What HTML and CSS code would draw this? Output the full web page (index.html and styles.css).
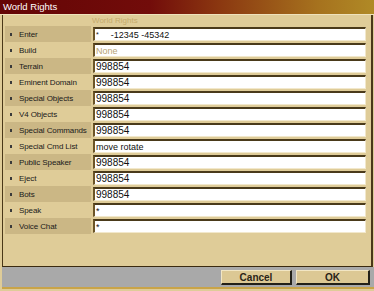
FILE: index.html
```html
<!DOCTYPE html>
<html lang="en">
<head>
  <meta charset="UTF-8" />
  <title>World Rights</title>
  <link rel="stylesheet" href="styles.css">
</head>
<body>
  <div class="window">
    <div class="titlebar">World Rights</div>

    <div class="panel">
      <div class="panel-head">World Rights</div>

      <div class="row dark">
        <div class="label"><span class="dot"></span>Enter</div>
        <div class="value small"><span class="star">*</span>-12345 -45342</div>
      </div>
      <div class="row">
        <div class="label"><span class="dot"></span>Build</div>
        <div class="value none">None</div>
      </div>
      <div class="row dark">
        <div class="label"><span class="dot"></span>Terrain</div>
        <div class="value">998854</div>
      </div>
      <div class="row">
        <div class="label"><span class="dot"></span>Eminent Domain</div>
        <div class="value">998854</div>
      </div>
      <div class="row dark">
        <div class="label"><span class="dot"></span>Special Objects</div>
        <div class="value">998854</div>
      </div>
      <div class="row">
        <div class="label"><span class="dot"></span>V4 Objects</div>
        <div class="value">998854</div>
      </div>
      <div class="row dark">
        <div class="label"><span class="dot"></span>Special Commands</div>
        <div class="value">998854</div>
      </div>
      <div class="row">
        <div class="label"><span class="dot"></span>Special Cmd List</div>
        <div class="value small">move rotate</div>
      </div>
      <div class="row dark">
        <div class="label"><span class="dot"></span>Public Speaker</div>
        <div class="value">998854</div>
      </div>
      <div class="row">
        <div class="label"><span class="dot"></span>Eject</div>
        <div class="value">998854</div>
      </div>
      <div class="row dark">
        <div class="label"><span class="dot"></span>Bots</div>
        <div class="value">998854</div>
      </div>
      <div class="row">
        <div class="label"><span class="dot"></span>Speak</div>
        <div class="value small">*</div>
      </div>
      <div class="row dark">
        <div class="label"><span class="dot"></span>Voice Chat</div>
        <div class="value small">*</div>
      </div>
    </div>

    <div class="footer">
      <button class="btn btn-cancel">Cancel</button>
      <button class="btn btn-ok">OK</button>
    </div>
  </div>
</body>
</html>
```

FILE: styles.css
```css
body {
  margin: 0;
  padding: 0;
  font-family: "Liberation Sans", Arial, sans-serif;
}

.window {
  width: 374px;
  height: 291px;
  background-color: #dfcc98;
  display: flex;
  flex-direction: column;
  overflow: hidden;
}

.titlebar {
  height: 14px;
  line-height: 14px;
  padding-left: 3px;
  font-size: 9.5px;
  color: #ffffff;
  background: linear-gradient(to right, #640505 0%, #720c0a 40%, #8a3610 58%, #a6721e 85%, #b08a26 100%);
  border-bottom: 1px solid #efe2bc;
}

.panel {
  height: 251px;
  margin: 0 1px 0 2px;
  padding: 0 2px 0 2px;
  border-left: 1px solid #4a3818;
  border-right: 2px solid #4a3818;
  border-bottom: 1px solid #3a2a10;
}

.panel-head {
  height: 11px;
  line-height: 12px;
  padding-left: 87px;
  font-size: 8px;
  color: #c5ab6c;
}

.row {
  display: flex;
  height: 16px;
}

.label {
  width: 86px;
  display: flex;
  align-items: center;
  font-size: 8px;
  letter-spacing: -0.1px;
  color: #1a1a1a;
}

.row.dark .label {
  background-color: #cbb785;
}

.dot {
  width: 2px;
  height: 3px;
  background-color: #3a3a3a;
  margin: 0 7px 0 5px;
}

.value {
  flex: 1;
  margin: 1px 3px 0 2px;
  height: 11px;
  line-height: 12px;
  padding-left: 1px;
  background-color: #ffffff;
  border-top: 2px solid #4a3a1a;
  border-left: 2px solid #6b5427;
  border-right: 1px solid #f2e8cc;
  border-bottom: 1px solid #f2e8cc;
  font-size: 10px;
  color: #101010;
  white-space: nowrap;
}

.value.small {
  font-size: 9px;
}

.value.none {
  color: #b8a474;
  font-size: 9px;
}

.star {
  font-size: 7px;
  vertical-align: top;
  margin-right: 12px;
}

.footer {
  height: 22px;
  margin-left: 2px;
  background-color: #a9a9a9;
  border-bottom: 2px solid #c9a448;
  display: flex;
  justify-content: flex-end;
  align-items: flex-start;
  gap: 4px;
  padding: 3px 4px 0 0;
  box-sizing: border-box;
}

.btn {
  height: 15px;
  padding: 0;
  background-color: #dcc894;
  border-top: 1px solid #f2e6c4;
  border-left: 1px solid #f2e6c4;
  border-right: 2px solid #222018;
  border-bottom: 2px solid #222018;
  font-family: "Liberation Sans", Arial, sans-serif;
  font-weight: bold;
  font-size: 10px;
  color: #2a2418;
  cursor: pointer;
}

.btn-cancel {
  width: 71px;
}

.btn-ok {
  width: 74px;
}
```
